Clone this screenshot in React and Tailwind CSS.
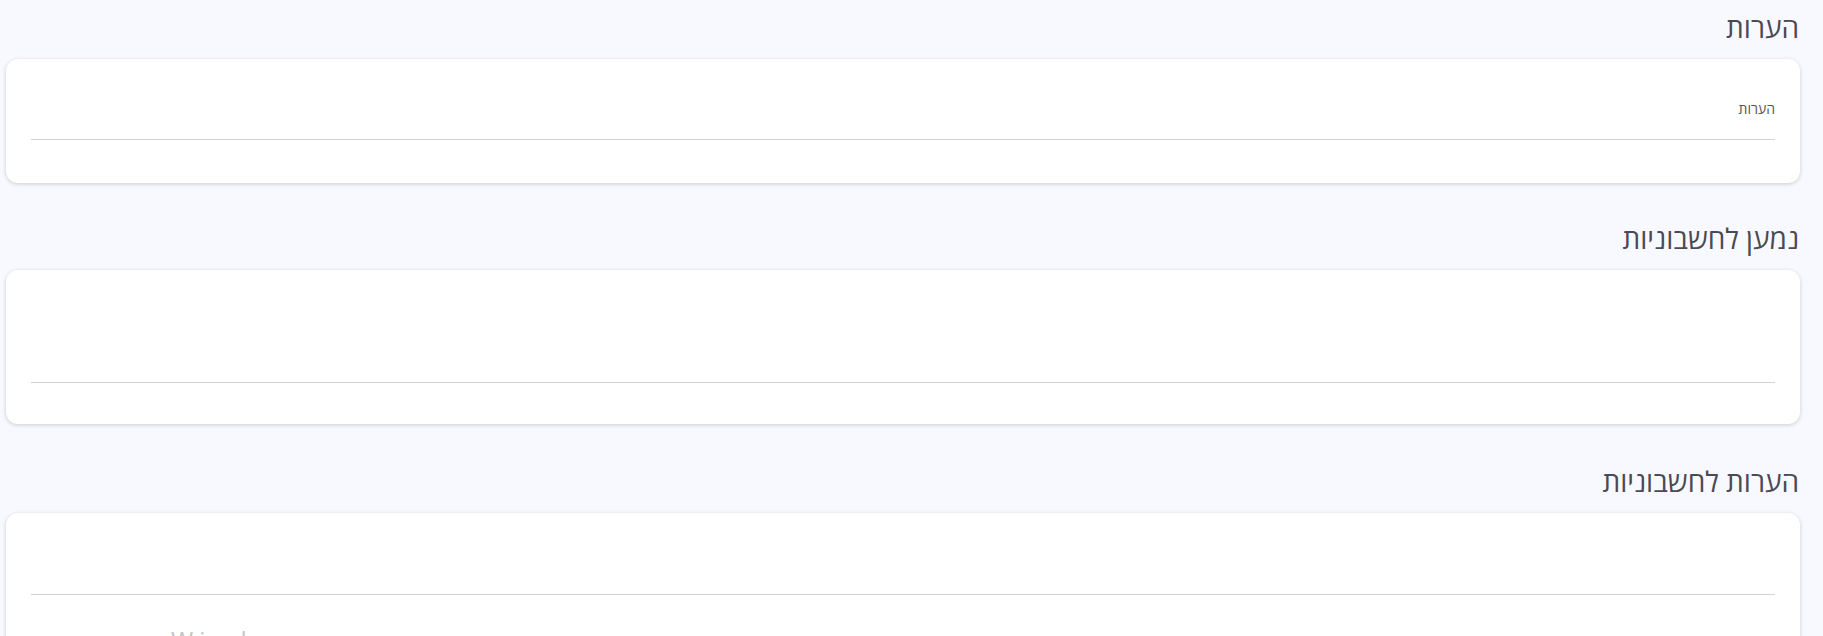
const Section = ({ title, children, className }) => (
    <section className={className}>
        <h2 className="h-[32px] text-[28px] leading-[32px] font-normal text-[#4a4a55] mb-[16px] pr-px">{title}</h2>
        {children}
    </section>
);

const Card = ({ children, className }) => (
    <div className={`bg-white rounded-[12px] shadow-[0_1px_4px_rgba(0,0,0,0.18)] px-[25px] ${className}`}>
        {children}
    </div>
);

export default function App() {
    return (
        <div
            dir="rtl"
            className="bg-[#f8f9fe] pl-[6px] pr-[23px] pt-[11px] overflow-hidden h-[636px]"
            style={{ fontFamily: '"Open Sans", "Liberation Sans", "DejaVu Sans", sans-serif' }}
        >
            <Section title="הערות">
                <Card className="pt-[41px] pb-[43px]">
                    <div className="h-[18px] text-[14px] leading-[18px] text-[#555]">הערות</div>
                    <div className="h-[22px] border-b border-[#d3d3d3]"></div>
                </Card>
            </Section>

            <Section title="נמען לחשבוניות" className="mt-[39px]">
                <Card className="pt-[40px] pb-[41px]">
                    <div className="h-[73px] border-b border-[#d3d3d3]"></div>
                </Card>
            </Section>

            <Section title="הערות לחשבוניות" className="mt-[41px]">
                <Card className="pt-[40px] pb-[30px]">
                    <div className="h-[42px] border-b border-[#d3d3d3]"></div>
                    <div className="mt-[30px] pl-[140px] text-left text-[24px] leading-[30px] tracking-[6px] text-[#c4c4c4]" dir="ltr">Windows</div>
                </Card>
            </Section>
        </div>
    );
}
